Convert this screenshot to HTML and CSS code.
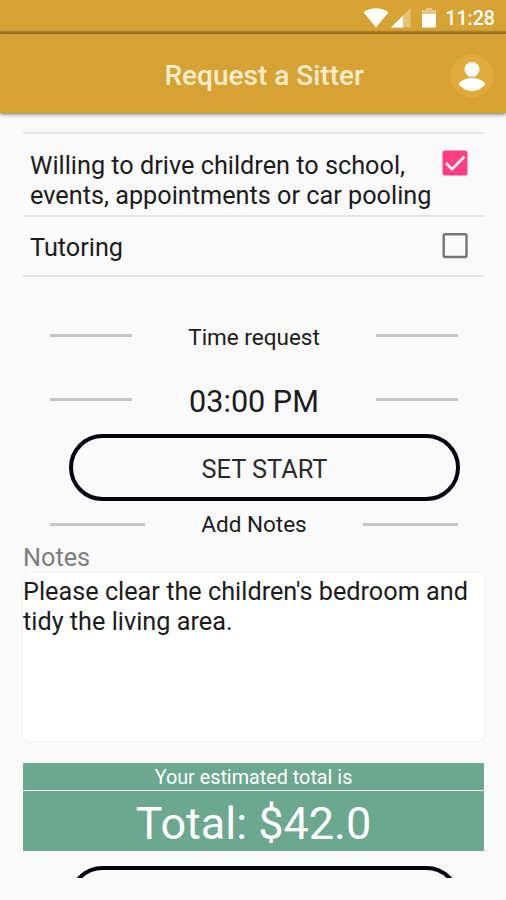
FILE: index.html
```html
<!DOCTYPE html>
<html lang="en">
<head>
<meta charset="utf-8">
<title>Request a Sitter</title>
<link rel="stylesheet" href="styles.css">
</head>
<body>
<div class="status">
  <svg class="wifi" width="26" height="20" viewBox="0 0 26 20"><path d="M.5 4.200C8-1.200 18-1.200 25.500 4.200L13 19.500z" fill="#fff"/></svg>
  <svg class="signal" width="20" height="20" viewBox="0 0 20 20"><path d="M0 19.500 19.500 0v19.500z" fill="#fff" opacity=".35"/><path d="M0 19.500 12 7.500v12z" fill="#fff"/></svg>
  <svg class="battery" width="14" height="20" viewBox="0 0 14 20"><path d="M0 2h4V0h6v2h4v4H0z" fill="#fff" opacity=".4"/><path d="M0 6h14v13.500H0z" fill="#fff"/></svg>
  <span class="clock">11:28</span>
</div>
<header class="appbar">
  <h1 class="title">Request a Sitter</h1>
  <svg class="avatar" width="44" height="44" viewBox="0 0 44 44"><circle cx="22" cy="22" r="21.500" fill="#dfab3d"/><circle cx="22" cy="15.500" r="7.500" fill="#fff"/><path d="M8.500 30C12 25.800 17 24 22 24s10 1.800 13.500 6C32 34.800 27 37 22 37S12 34.800 8.500 30z" fill="#fff"/></svg>
</header>
<main class="scroll">
  <ul class="options">
    <li class="option tall"><span class="label">Willing to drive children to school,<br>events, appointments or car pooling</span>
      <svg class="check" width="26" height="26" viewBox="0 0 26 26"><rect x=".5" y=".5" width="25" height="25" rx="2.500" fill="#ff3f7f"/><path d="M4 13.200l6 6L22.500 6.500" fill="none" stroke="#fff" stroke-width="2.600"/></svg></li>
    <li class="option"><span class="label">Tutoring</span>
      <svg class="check" width="26" height="26" viewBox="0 0 26 26"><rect x="1.700" y="1.200" width="22.800" height="22.800" rx="1.500" fill="none" stroke="#757575" stroke-width="2.400"/></svg></li>
  </ul>
  <div class="divider request"><i class="rule"></i><span>Time request</span><i class="rule"></i></div>
  <div class="divider time"><i class="rule"></i><span>03:00 PM</span><i class="rule"></i></div>
  <button class="pill">SET START</button>
  <div class="divider notes-head"><i class="rule"></i><span>Add Notes</span><i class="rule"></i></div>
  <div class="notes-label">Notes</div>
  <div class="notes">Please clear the children's bedroom and<br>tidy the living area.</div>
  <div class="estimate">Your estimated total is</div>
  <div class="total">Total: $42.0</div>
  <button class="pill next" aria-label="Continue"></button>
</main>
</body>
</html>
```
FILE: styles.css
```css
* { box-sizing: border-box; }
body {
  margin: 0;
  height: 900px;
  overflow: hidden;
  background: #fafafa;
  color: #1c1c1c;
  font-family: Roboto, "Liberation Sans", sans-serif;
}
.status {
  display: flex;
  align-items: flex-start;
  justify-content: flex-end;
  height: 34px;
  padding: 8px 11px 0 0;
  background: linear-gradient(#d7a335 0 30px, #c3922f 31px, #a67b25 32px, #a67b25);
}
.signal { margin-left: 2px; }
.battery { margin-left: 11px; }
.clock {
  margin-left: 9px;
  color: #fff;
  font-size: 19.6px;
  font-weight: 500;
  line-height: 21px;
}
.appbar {
  display: flex;
  align-items: center;
  height: 79px;
  padding: 5px 12px 0 164.5px;
  background: linear-gradient(#d6a235 85%, #d8a52b);
  box-shadow: 0 1px 4px rgba(0, 0, 0, .6);
}
.title {
  flex: 1;
  margin: 0;
  color: #fdecc9;
  font-size: 28px;
  font-weight: 500;
  line-height: 34px;
}
.scroll {
  height: 765px;
  padding: 19px 22px 0 23px;
  overflow: hidden;
}
.options {
  margin: 0;
  padding: 0;
  list-style: none;
  border-top: 2px solid #e6e6e6;
}
.option {
  display: flex;
  justify-content: space-between;
  height: 60px;
  padding: 16px 16px 0 7px;
  border-bottom: 2px solid #e4e4e4;
}
.option.tall { height: 83px; }
.label {
  font-size: 25.25px;
  line-height: 30px;
  white-space: nowrap;
}
.tall .label { padding-top: 1px; }
.check { flex: none; }
.divider {
  display: flex;
  align-items: center;
  justify-content: space-between;
  margin: 0 26px 0 27px;
  white-space: nowrap;
}
.rule {
  width: 82px;
  height: 3px;
  background: #c6c6c6;
}
.request { height: 30px; margin-top: 43px; font-size: 22.5px; }
.request span { position: relative; top: 2px; }
.time { height: 40px; margin-top: 29px; font-size: 30.6px; }
.time span { position: relative; top: 2px; }
.pill {
  display: block;
  width: 391px;
  height: 67px;
  margin: 15px 0 0 46px;
  padding: 3px 0 0;
  border: 4px solid #05050f;
  border-radius: 34px;
  background: transparent;
  color: #2a2a2a;
  font: 400 25.3px Roboto, "Liberation Sans", sans-serif;
}
.notes-head { height: 30px; margin-top: 8px; font-size: 22.5px; }
.notes-head .rule { width: 95px; }
.notes-label {
  height: 30px;
  margin-top: 4px;
  color: #7d7d7d;
  font-size: 25.25px;
  line-height: 30px;
}
.notes {
  height: 168px;
  padding-top: 4px;
  border-radius: 6px;
  background: #fff;
  box-shadow: 0 0 2px rgba(0, 0, 0, .12);
  font-size: 25.25px;
  line-height: 30px;
  white-space: nowrap;
}
.estimate, .total {
  background: #6ba88f;
  color: #fff;
  text-align: center;
}
.estimate { height: 27px; margin-top: 22px; font-size: 19.8px; line-height: 29px; }
.total { height: 60px; margin-top: 1px; font-size: 45px; line-height: 65px; }
.next { margin-top: 15px; }
```
